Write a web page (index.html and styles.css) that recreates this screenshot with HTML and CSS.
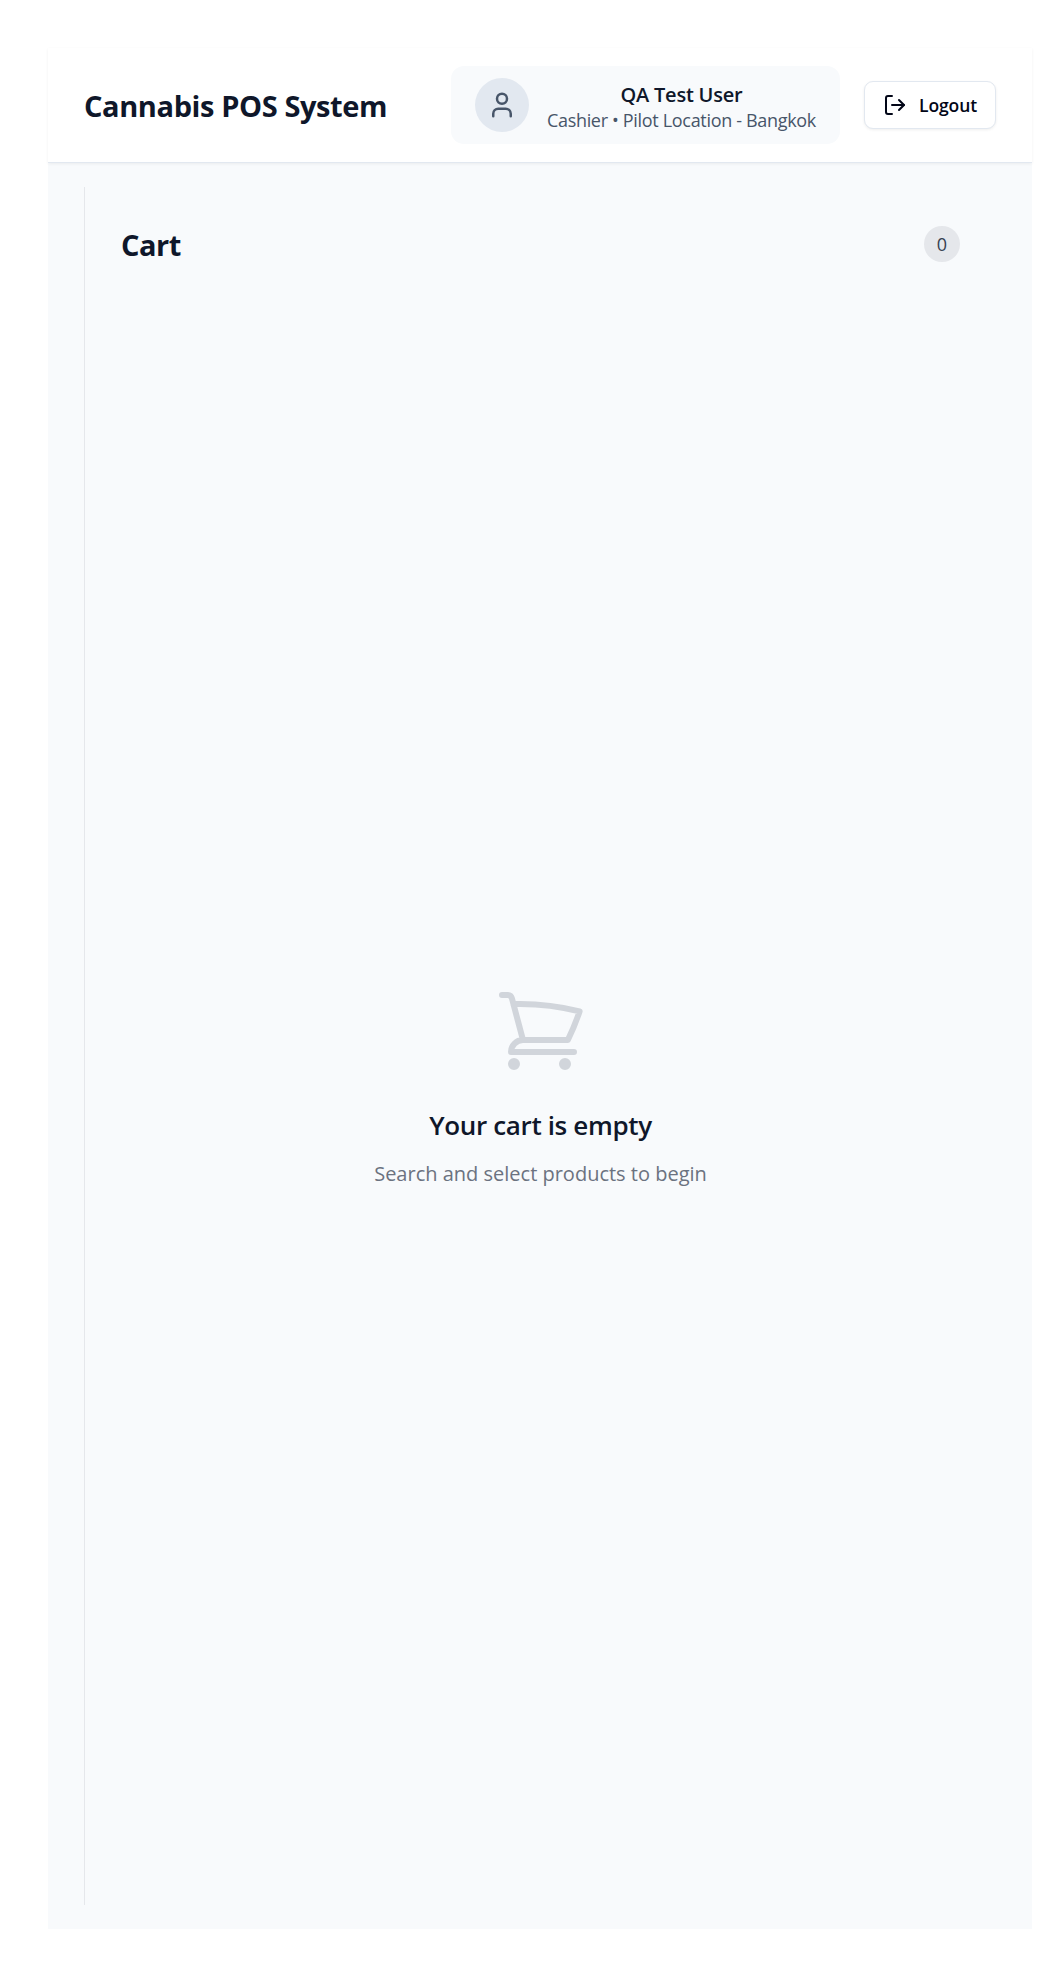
FILE: index.html
```html
<!DOCTYPE html>
<html lang="en">
<head>
<meta charset="utf-8">
<title>Cannabis POS System</title>
<link rel="stylesheet" href="styles.css">
</head>
<body>
<div class="app">
  <header class="topbar">
    <h1 class="brand">Cannabis POS System</h1>
    <div class="actions">
      <div class="user">
        <div class="avatar">
          <svg class="avatar-icon" viewBox="0 0 24 24" fill="none" stroke="currentColor" stroke-width="2" stroke-linecap="round" stroke-linejoin="round"><path d="M19 21v-2a4 4 0 0 0-4-4H9a4 4 0 0 0-4 4v2"/><circle cx="12" cy="7" r="4"/></svg>
        </div>
        <div class="identity">
          <div class="name">QA Test User</div>
          <div class="role">Cashier • Pilot Location - Bangkok</div>
        </div>
      </div>
      <button class="logout" type="button">
        <svg class="logout-icon" viewBox="0 0 24 24" fill="none" stroke="currentColor" stroke-width="2" stroke-linecap="round" stroke-linejoin="round"><path d="M9 21H5a2 2 0 0 1-2-2V5a2 2 0 0 1 2-2h4"/><path d="m16 17 5-5-5-5"/><path d="M21 12H9"/></svg>
        <span>Logout</span>
      </button>
    </div>
  </header>
  <main class="content">
    <section class="cart">
      <div class="cart-head">
        <h2 class="cart-title">Cart</h2>
        <span class="count">0</span>
      </div>
      <div class="empty">
        <svg class="empty-icon" viewBox="0 0 24 24" fill="none" stroke="currentColor" stroke-width="1.5" stroke-linecap="round" stroke-linejoin="round"><path d="M2.25 3h1.386c.51 0 .955.343 1.087.835l.383 1.437M7.5 14.25a3 3 0 0 0-3 3h15.75m-12.75-3h11.218c1.121-2.3 2.1-4.684 2.924-7.138a60.114 60.114 0 0 0-16.536-1.84M7.5 14.25 5.106 5.272M6 20.25a.75.75 0 1 1-1.5 0 .75.75 0 0 1 1.5 0Zm12.75 0a.75.75 0 1 1-1.5 0 .75.75 0 0 1 1.5 0Z"/></svg>
        <h3 class="empty-title">Your cart is empty</h3>
        <p class="empty-text">Search and select products to begin</p>
      </div>
    </section>
  </main>
</div>
</body>
</html>
```
FILE: styles.css
```css
* { box-sizing: border-box; }
body {
  margin: 0;
  padding: 48px 26px 48px 48px;
  background: #fff;
  color: #0f172a;
  font-family: "Segoe UI", "Open Sans", sans-serif;
}
h1, h2, h3, p { margin: 0; }
button { font-family: inherit; }
.app { display: flex; flex-direction: column; height: 1881px; background: #f8fafc; }
.topbar {
  display: flex; align-items: center; justify-content: space-between;
  padding: 18px 36px;
  height: 115px;
  background: #fff;
  border-bottom: 1px solid #e2e8f0;
  box-shadow: 0 1px 3px rgba(0, 0, 0, .06);
}
.brand { padding-top: 2px; font-size: 29px; font-weight: 700; line-height: 42px; letter-spacing: -.4px; }
.actions { display: flex; align-items: center; gap: 24px; }
.user { display: flex; align-items: center; gap: 18px; width: 389px; height: 78px; padding: 12px 24px; border-radius: 13px; background: #f8fafc; }
.avatar { display: flex; align-items: center; justify-content: center; width: 54px; height: 54px; border-radius: 50%; background: #e2e8f0; color: #475569; }
.avatar-icon { width: 30px; height: 30px; }
.identity { flex: 1; padding-top: 4px; text-align: center; white-space: nowrap; }
.name { font-size: 20px; font-weight: 600; line-height: 27px; letter-spacing: -.23px; }
.role { font-size: 18px; line-height: 25px; color: #475569; letter-spacing: -.32px; }
.logout { display: flex; align-items: center; width: 132px; height: 48px; padding: 0 18px; gap: 12px; border: 1px solid #e2e8f0; border-radius: 9px; background: #fff; color: #020617; font-size: 17.5px; font-weight: 600; letter-spacing: -.1px; box-shadow: 0 1px 3px rgba(0, 0, 0, .07); }
.logout-icon { width: 24px; height: 24px; }
.content { flex: 1; display: flex; padding: 24px 36px; }
.cart { flex: 1; display: flex; flex-direction: column; padding: 36px 0 0; border-left: 1px solid #e5e7eb; }
.cart-head { display: flex; align-items: center; justify-content: space-between; height: 42px; padding: 0 36px; }
.cart-title { padding-top: 2px; font-size: 29px; font-weight: 700; line-height: 42px; letter-spacing: -.5px; }
.count { display: flex; align-items: center; justify-content: center; width: 36px; height: 36px; border-radius: 50%; background: #e5e7eb; color: #374151; font-size: 18px; font-weight: 500; }
.empty { display: flex; flex-direction: column; align-items: center; padding-top: 718px; }
.empty-icon { width: 96px; height: 96px; color: #d1d5db; }
.empty-title { margin-top: 28px; font-size: 26px; font-weight: 600; line-height: 36px; letter-spacing: -.35px; }
.empty-text { margin-top: 16px; font-size: 20px; line-height: 30px; color: #6b7280; }
```
